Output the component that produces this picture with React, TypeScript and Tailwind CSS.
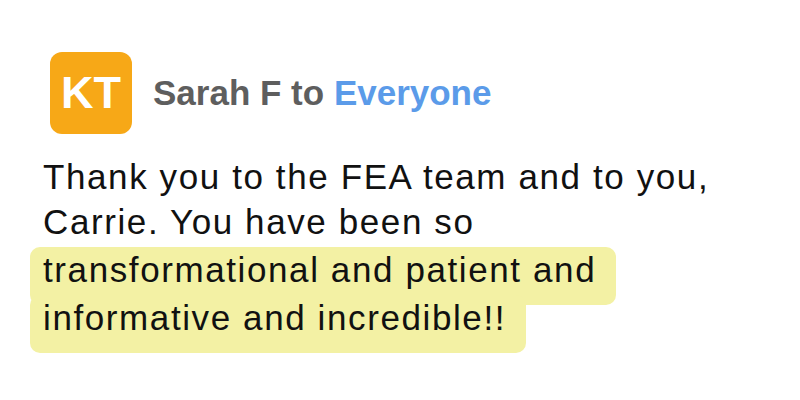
export default function App() {
  return (
    <div className="w-[800px] h-[400px] bg-white overflow-hidden" style={{ fontFamily: '"Liberation Sans", Arial, sans-serif' }}>
      <div className="flex items-center gap-[21px] pl-[50px] pt-[52px]">
        <div className="w-[82px] h-[82px] rounded-[12px] bg-[#f7a817] flex items-center justify-center text-white font-bold text-[45px]">
          KT
        </div>
        <div className="text-[35px] font-bold text-[#5e5e5e]">
          Sarah F to <span className="text-[#5b9be9]">Everyone</span>
        </div>
      </div>
      <div className="pl-[43px] pt-[20px] w-[790px] text-[35px] tracking-[1.6px] text-[#111111]">
        <div className="leading-[45px]">
          Thank you to the FEA team and to you,
          <br />
          Carrie. You have been so
        </div>
        <div className="mt-[2px] leading-[48px]">
          <span className="bg-[#f3f1a4] rounded-[10px] pl-[13px] pr-[20px] pt-[3px] pb-[16px] -ml-[13px] box-decoration-clone">
            transformational and patient and
            <br />
            informative and incredible!!
          </span>
        </div>
      </div>
    </div>
  );
}
